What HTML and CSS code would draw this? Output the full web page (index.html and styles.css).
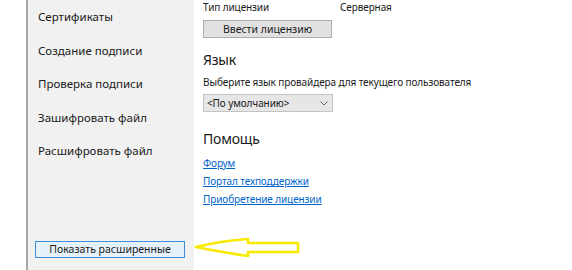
FILE: index.html
```html
<!DOCTYPE html>
<html lang="ru">
<head>
<meta charset="utf-8">
<link rel="stylesheet" href="styles.css">
</head>
<body>
<div class="window">
  <div class="gutter"></div>
  <nav class="sidebar">
    <ul class="nav">
      <li>Сертификаты</li>
      <li>Создание подписи</li>
      <li>Проверка подписи</li>
      <li>Зашифровать файл</li>
      <li>Расшифровать файл</li>
    </ul>
    <button class="btn-adv">Показать расширенные</button>
  </nav>
  <main class="content">
    <div class="row"><span class="label">Тип лицензии</span><span>Серверная</span></div>
    <button class="btn">Ввести лицензию</button>
    <h2 class="title">Язык</h2>
    <p class="desc">Выберите язык провайдера для текущего пользователя</p>
    <div class="select"><span>&lt;По умолчанию&gt;</span>
      <svg class="chev" width="8" height="5" viewBox="0 0 8 5"><path d="M0.5 0.5 L4 4 L7.5 0.5" fill="none" stroke="#666" stroke-width="1"/></svg>
    </div>
    <h2 class="title title-help">Помощь</h2>
    <ul class="links">
      <li><a href="#">Форум</a></li>
      <li><a href="#">Портал техподдержки</a></li>
      <li><a href="#">Приобретение лицензии</a></li>
    </ul>
  </main>
  <svg class="arrow" width="120" height="32" viewBox="190 230 120 32">
    <path d="M196 247 Q220 241 248 239 L248 243 L298 243 L298 252 L248 252 L248 256 Q220 252 196 247 Z" fill="#fff" stroke="#f7ea00" stroke-width="2.6" stroke-linejoin="round"/>
  </svg>
</div>
</body>
</html>
```

FILE: styles.css
```css
* { box-sizing: border-box; }
html, body { margin: 0; padding: 0; }
body {
  width: 572px;
  height: 270px;
  overflow: hidden;
  background: #fff;
  font-family: "Noto Sans", "Open Sans", sans-serif;
  color: #1a1a1a;
}
.window {
  position: relative;
  display: flex;
  height: 270px;
}
.gutter {
  width: 28px;
  background: #fff;
  border-right: 2px solid #a8a8a8;
}
.sidebar {
  width: 166px;
  background: #f1f1f1;
  display: flex;
  flex-direction: column;
  padding: 0 0 12px 7px;
}
.nav {
  list-style: none;
  margin: 9px 0 0 0;
  padding: 0 0 0 3px;
  display: flex;
  flex-direction: column;
  gap: 17.5px;
  font-size: 11.5px;
  line-height: 16px;
}
.btn-adv {
  margin-top: auto;
  width: 150px;
  height: 17px;
  padding: 0;
  font-family: inherit;
  font-size: 10.5px;
  line-height: 15px;
  color: #1a1a1a;
  background: #e5f1fb;
  border: 1px solid #3d8fdc;
}
.content {
  flex: 1;
  padding-left: 9px;
  font-size: 10px;
  letter-spacing: -0.1px;
  display: flex;
  flex-direction: column;
  align-items: flex-start;
}
.row {
  display: flex;
  line-height: 14px;
}
.label { width: 137px; }
.btn {
  margin-top: 6px;
  width: 129px;
  height: 18px;
  padding: 0;
  font-family: inherit;
  font-size: 10.5px;
  line-height: 16px;
  color: #1a1a1a;
  background: #e1e1e1;
  border: 1px solid #adadad;
}
.title {
  margin: 12px 0 0 0;
  font-size: 14px;
  font-weight: normal;
  letter-spacing: -0.2px;
  line-height: 20px;
}
.title-help { margin-top: 17px; }
.desc {
  margin: 5px 0 0 0;
  line-height: 14px;
}
.select {
  margin-top: 5px;
  width: 130px;
  height: 18px;
  background: #e6e6e6;
  border: 1px solid #c4c4c4;
  display: flex;
  align-items: center;
  justify-content: space-between;
  padding: 0 4px 0 3px;
  line-height: 16px;
}
.chev { display: block; }
.links {
  list-style: none;
  margin: 5px 0 0 0;
  padding: 0;
  line-height: 18px;
}
.links a { color: #0066cc; text-decoration: underline; }
.arrow {
  position: absolute;
  left: 190px;
  top: 230px;
}
```
